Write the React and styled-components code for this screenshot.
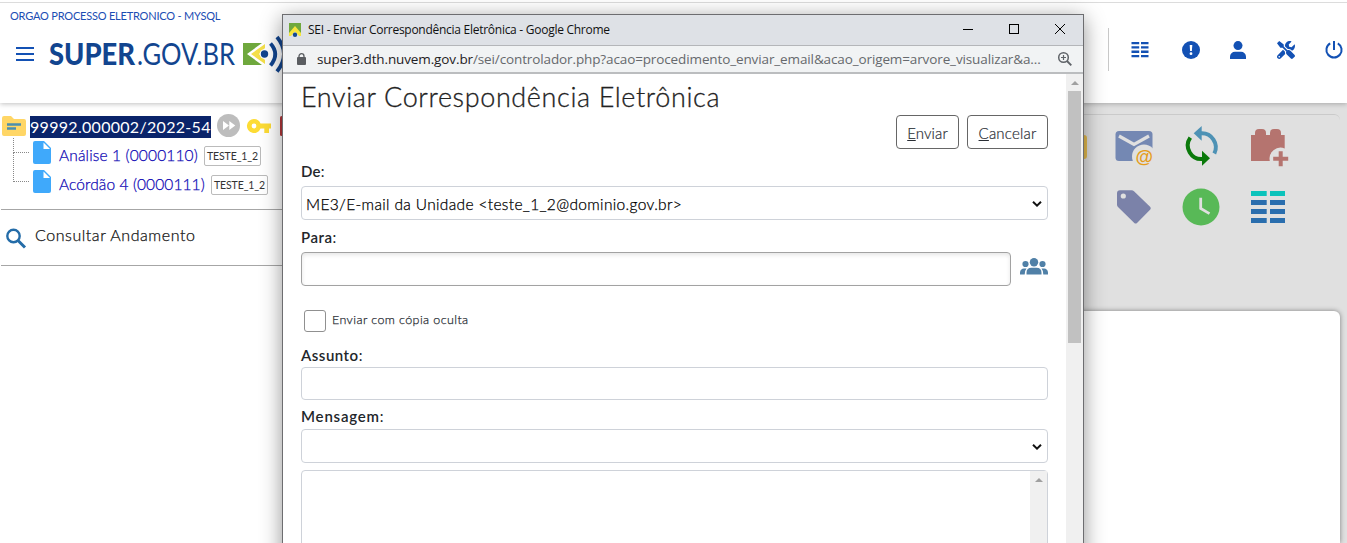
import React from "react";
import styled, { createGlobalStyle } from "styled-components";

const GlobalStyle = createGlobalStyle`
  * { box-sizing: border-box; }
  body { margin: 0; overflow: hidden; background: #fff; font-family: Lato, "Open Sans", sans-serif; }
  svg { display: block; flex: none; overflow: visible; }
`;

const Page = styled.div`
  position: relative;
  width: 1347px;
  height: 543px;
  overflow: hidden;
  display: flex;
  flex-direction: column;
  background: #fff;
`;

/* Header */
const Header = styled.header`
  position: relative;
  z-index: 1;
  flex: none;
  height: 103px;
  background: linear-gradient(#fff 2px, #dcdcdc 2px, #dcdcdc 3px, #fff 3px);
  box-shadow: 0 1px 5px rgba(0, 0, 0, 0.25);
  display: flex;
  justify-content: space-between;
`;
const Brand = styled.div`
  padding: 9px 0 0 10px;
`;
const Agency = styled.div`
  font-size: 11px;
  line-height: 14px;
  color: #1b4db3;
  letter-spacing: ${(p) => p.$track};
  white-space: nowrap;
`;
const LogoRow = styled.div`
  display: flex;
  align-items: flex-start;
  gap: 15px;
  padding: 11px 0 0 6px;
`;
const MenuButton = styled.div`
  padding-top: 12px;
`;
const HeaderTools = styled.nav`
  height: 43px;
  margin-top: 28px;
  padding: 0 4px 0 22px;
  border-left: 1px solid #c8c8c8;
  display: flex;
  align-items: center;
  gap: 30.4px;
`;

/* Main area */
const Main = styled.main`
  flex: 1;
  display: flex;
  justify-content: space-between;
`;
const Sidebar = styled.aside`
  width: 283px;
  padding-top: 10px;
`;
const TreeRoot = styled.div`
  display: flex;
  align-items: center;
  height: 25px;
  padding-left: 2px;
`;
const Selected = styled.span`
  display: block;
  width: 181px;
  height: 22px;
  margin: 3px 6px 0 4px;
  background: #0a246a;
  color: #fff;
  font-size: 16px;
  line-height: 22px;
  letter-spacing: ${(p) => p.$track};
  white-space: nowrap;
`;
const Key = styled.div`
  margin: 0 9px 0 7px;
`;
const RedEdge = styled.div`
  width: 10px;
  height: 20px;
  border-radius: 2px;
  background: #b5373a;
`;
const Branch = styled.div`
  margin-left: 13px;
`;
const TreeNode = styled.div`
  display: flex;
  align-items: center;
  height: 29px;
`;
const Connector = styled.div`
  align-self: flex-start;
  width: 16px;
  height: ${(p) => p.$h}px;
  margin-top: ${(p) => p.$top || 0}px;
  border-left: 1px dotted #888;
  border-bottom: 1px dotted #888;
  margin-right: 4px;
`;
const NodeLink = styled.a`
  margin: 4px 6px 0 8px;
  font-size: 15.5px;
  font-weight: 300;
  -webkit-text-stroke: 0.25px;
  color: #0f08b4;
  letter-spacing: ${(p) => p.$track};
  width: ${(p) => p.$w}px;
  white-space: nowrap;
`;
const Unit = styled.span`
  width: 57px;
  height: 20px;
  margin-top: 6px;
  border: 1px solid #bbb;
  border-radius: 2px;
  font-size: 10.5px;
  line-height: 18px;
  letter-spacing: -0.1px;
  text-align: center;
  color: #333;
  white-space: nowrap;
`;
const Progress = styled.div`
  margin: 13px 0 0 1px;
  height: 57px;
  border-top: 1px solid #a6a6a6;
  border-bottom: 1px solid #a6a6a6;
  padding: 0 0 0 5px;
  display: flex;
  align-items: center;
  gap: 9px;
  font-size: 16px;
  font-weight: 300;
  -webkit-text-stroke: 0.25px;
  color: #111;
  letter-spacing: ${(p) => p.$track};
`;
const ProgressText = styled.span`
  margin-top: -6px;
`;

const Workspace = styled.section`
  width: 307px;
  background: #e0e0e0;
  display: flex;
  flex-direction: column;
`;
const ActionPanel = styled.div`
  height: 197px;
  margin: 11px 7px 0 0;
  border-top: 1px solid #cacaca;
  border-top-right-radius: 6px;
  padding: 13px 0 0 7px;
`;
const ActionGrid = styled.div`
  display: grid;
  grid-template-columns: repeat(4, 40px);
  grid-auto-rows: 40px;
  column-gap: 27px;
  row-gap: 19px;
`;
const YellowCell = styled.div`
  height: 24px;
  margin-top: 7px;
  border-radius: 3px;
  background: #e7bd4f;
`;
const Canvas = styled.div`
  flex: 1;
  margin-right: 7px;
  background: #fff;
  border-top-right-radius: 6px;
  box-shadow: 0 0 5px rgba(0, 0, 0, 0.45);
`;

/* Browser window floating above the page */
const Popup = styled.div`
  position: absolute;
  z-index: 2;
  left: 282px;
  top: 14px;
  width: 802px;
  height: 560px;
  border: 1px solid #6d6d70;
  background: #fff;
  box-shadow: 0 4px 20px rgba(0, 0, 0, 0.42);
  display: flex;
  flex-direction: column;
`;
const TitleBar = styled.div`
  flex: none;
  height: 31px;
  border-bottom: 1px solid #b4b6b9;
  background: #dee1e6;
  display: flex;
  align-items: center;
  padding: 0 17px 0 6px;
`;
const WindowTitle = styled.span`
  flex: 1;
  margin-left: 7px;
  font: 12px/16px "Open Sans", sans-serif;
  letter-spacing: ${(p) => p.$track};
  color: #111;
`;
const WindowControls = styled.div`
  display: flex;
  gap: 34px;
  margin-top: -2px;
`;
const AddressBar = styled.div`
  flex: none;
  height: 28px;
  border-bottom: 2px solid #bbbdbf;
  background: #f1f3f4;
  display: flex;
  align-items: center;
  padding: 0 11px 0 14px;
`;
const Url = styled.span`
  flex: 1;
  margin-left: 11px;
  font: 13.5px/18px "Open Sans", sans-serif;
  letter-spacing: ${(p) => p.$track};
  color: #66696d;
  white-space: nowrap;
  b { font-weight: 400; color: #1f2023; }
`;
const Viewport = styled.div`
  flex: 1;
  display: flex;
`;
const Form = styled.form`
  flex: 1;
  padding: 7px 18px 0;
`;
const Heading = styled.h1`
  margin: 0;
  font-size: 27px;
  font-weight: 300;
  line-height: 32px;
  height: 34px;
  -webkit-text-stroke: 0.3px;
  color: #222;
  letter-spacing: ${(p) => p.$track};
  white-space: nowrap;
`;
const ButtonRow = styled.div`
  display: flex;
  justify-content: flex-end;
  gap: 8px;
`;
const Button = styled.button`
  width: ${(p) => p.$w}px;
  height: 34px;
  padding: 1px 0 0;
  border: 1px solid #666;
  border-radius: 4px;
  background: #fff;
  font: 300 15px Lato, sans-serif;
  -webkit-text-stroke: 0.2px;
  letter-spacing: ${(p) => p.$track};
  color: #2a2e35;
`;
const Label = styled.label`
  display: block;
  height: 18px;
  margin-top: ${(p) => p.$top}px;
  font-size: 15px;
  line-height: 17px;
  font-weight: 600;
  letter-spacing: ${(p) => p.$track};
  color: #22262a;
  span { font-weight: 400; }
`;
const Field = styled.div`
  flex: 1;
  height: ${(p) => p.$h || 34}px;
  margin-top: ${(p) => p.$top || 0}px;
  border: 1px solid ${(p) => (p.$dark ? "#a2a2a2" : "#ced2d9")};
  border-radius: 4px;
  box-shadow: ${(p) => (p.$dark ? "inset 0 2px 4px rgba(0,0,0,.1)" : "none")};
  padding: 2px 5px 0 4px;
  display: flex;
  align-items: center;
  justify-content: space-between;
  font-size: 15.5px;
  font-weight: 300;
  -webkit-text-stroke: 0.25px;
  color: #000;
  letter-spacing: ${(p) => p.$track};
`;
const Recipients = styled.div`
  display: flex;
  align-items: center;
  gap: 9px;
  margin-top: 5px;
`;
const PeopleButton = styled.div`
  margin-top: -5px;
`;
const CheckRow = styled.div`
  display: flex;
  align-items: center;
  gap: 6px;
  margin: 24px 0 0 3px;
  font-size: 12.5px;
  font-weight: 300;
  -webkit-text-stroke: 0.25px;
  color: #2a2e35;
  letter-spacing: ${(p) => p.$track};
`;
const CheckBox = styled.span`
  width: 22px;
  height: 22px;
  border: 1px solid #909090;
  border-radius: 3px;
`;
const CheckText = styled.span`
  margin-top: -3px;
`;
const TextArea = styled.div`
  height: 120px;
  margin-top: 7px;
  border: 1px solid #ced2d9;
  border-radius: 4px;
  display: flex;
  justify-content: flex-end;
`;
const ScrollTrack = styled.div`
  width: 17px;
  background: #f0f0f0;
  display: flex;
  flex-direction: column;
  align-items: center;
  padding-top: 7px;
`;
const ScrollThumb = styled.div`
  width: 13px;
  height: 252px;
  margin-top: 6px;
  background: #c1c1c1;
`;

const UpArrow = () => (
  <svg width="8" height="4"><path d="M4 0L8 4H0z" fill="#a0a0a0" /></svg>
);
const Chevron = () => (
  <svg width="10" height="6" viewBox="0 0 10 6">
    <path d="M1 .8L5 4.6L9 .8" fill="none" stroke="#111" strokeWidth="2" />
  </svg>
);
const Document = () => (
  <svg width="18" height="23" viewBox="0 0 18 23">
    <path d="M2 0H11L18 7V21a2 2 0 0 1-2 2H2a2 2 0 0 1-2-2V2a2 2 0 0 1 2-2z" fill="#3fa9fb" />
    <path d="M10.500 1.500V8H17z" fill="#fff" />
  </svg>
);

const Logo = () => (
  <svg width="236" height="44" viewBox="0 0 236 44">
    <g fontFamily="Lato" fontSize="31" fill="#12458f">
      <text x="0" y="31" fontWeight="900" textLength="86" lengthAdjust="spacingAndGlyphs">SUPER</text>
      <text x="88" y="31" textLength="98" lengthAdjust="spacingAndGlyphs">.GOV.BR</text>
    </g>
    <path d="M194 9H213L198 20L213 31H194z" fill="#6fa83d" />
    <path d="M216 10L202 20L216 30V26L210 20L216 14z" fill="#f4df49" />
    <circle cx="215.500" cy="20" r="4.800" fill="#fff" />
    <circle cx="215.500" cy="20" r="3.700" fill="#12458f" />
    <g fill="none" stroke="#12458f" strokeWidth="3.800">
      <path d="M221.500 9.500Q231 20 221.500 31.500" />
      <path d="M228 3Q242 20 228 37.500" />
    </g>
  </svg>
);

const HeaderIcons = () => (
  <HeaderTools>
    <svg width="18" height="18" viewBox="0 0 18 18" fill="#1351b4">
      {[1, 5.3, 9.6, 13.9].map((y) => (
        <path key={y} d={`M.5 ${y}h7.7v2.3H.5zM10 ${y}h7.5v2.3H10z`} />
      ))}
    </svg>
    <svg width="20" height="18" viewBox="-2 0 20 18">
      <circle cx="9" cy="9" r="9" fill="#1351b4" />
      <path d="M7.700 4h2.600l-.4 6H8.100z" fill="#fff" /><circle cx="9" cy="12.700" r="1.400" fill="#fff" />
    </svg>
    <svg width="16" height="18" viewBox="0 0 16 18" fill="#1351b4">
      <circle cx="8" cy="4.600" r="4.500" />
      <path d="M0 18v-2.200A5 5 0 0 1 5 10.800H11a5 5 0 0 1 5 5V18z" />
    </svg>
    <svg width="18" height="18" viewBox="0 0 512 512" fill="#1351b4">
      <path d="M501.100 395.700L384 278.600c-23.100-23.100-57.600-27.600-85.400-13.900L192 158.100V96L64 0 0 64l96 128h62.100l106.600 106.600c-13.600 27.800-9.200 62.300 13.900 85.400l117.100 117.100c14.600 14.600 38.200 14.600 52.700 0l52.700-52.700c14.500-14.600 14.500-38.200 0-52.700zM331.700 225c28.300 0 54.900 11 74.900 31l19.400 19.400c15.800-6.900 30.800-16.500 43.800-29.500 37.100-37.100 49.700-89.300 37.900-136.700-2.200-9-13.500-12.100-20.100-5.500l-74.400 74.400-67.900-11.300L334 98.900l74.400-74.400c6.600-6.600 3.400-17.900-5.700-20.200-47.400-11.700-99.600.9-136.600 37.900-28.500 28.500-41.900 66.100-41.200 103.600l82.100 82.100c8.100-1.900 16.500-2.900 24.700-2.900zm-103.900 82l-56.700-56.700L18.700 402.800c-25 25-25 65.500 0 90.500s65.500 25 90.500 0l123.600-123.600c-7.600-19.900-9.900-41.600-5-62.700zM64 472c-13.200 0-24-10.800-24-24 0-13.300 10.700-24 24-24s24 10.700 24 24c0 13.200-10.700 24-24 24z" />
    </svg>
    <svg width="18" height="18" viewBox="0 0 18 18" fill="none" stroke="#1351b4" strokeWidth="2">
      <path d="M5.200 2.300A7.600 7.600 0 1 0 12.800 2.300M9 0V9" />
    </svg>
  </HeaderTools>
);

const Actions = () => (
  <ActionGrid>
    <YellowCell />
    <svg width="40" height="40">
      <rect x="1.500" y="3" width="37" height="30" rx="3.500" fill="#7488b3" />
      <path d="M5 8L20 16.500L35 8" fill="none" stroke="#e0e0e0" strokeWidth="3.200" />
      <circle cx="30" cy="28.500" r="12" fill="#e0e0e0" />
      <text x="21.500" y="34.500" fontFamily="Liberation Sans" fontWeight="700" fontSize="19" fill="#e59d1c" textLength="17.500" lengthAdjust="spacingAndGlyphs">@</text>
    </svg>
    <svg width="40" height="40" fill="none" strokeWidth="4">
      <path d="M20 5.300A14 14 0 0 1 33.300 25.500" stroke="#4e92b5" />
      <path d="M20.700 -2V12.700L12.700 5.300z" fill="#4e92b5" />
      <path d="M9.300 9.700A13.600 13.600 0 0 0 22 31" stroke="#0a790a" />
      <path d="M21 22.700V37.700L29 30.300z" fill="#0a790a" />
    </svg>
    <svg width="40" height="40">
      <path d="M3 7H7V5Q7 1 11 1H14Q18 1 18 5V7H22V5Q22 1 26 1H29Q33 1 33 5V7H36.700V20.500A11 11 0 0 0 21.800 33H3z" fill="#b5746f" />
      <path d="M30.700 23.300h4v5.500h5.500v4h-5.500v5.500h-4v-5.500h-5.500v-4h5.500z" fill="#b5746f" />
    </svg>
    <div />
    <svg width="40" height="40">
      <path d="M6 3.300H17.500Q19 3.300 20 4.300L36.300 20Q37.300 21.200 36.300 22.500L23 36Q21.700 37.200 20.300 36L4 20Q3 19 3 17.500V6.300Q3 3.300 6 3.300z" fill="#7b82a9" />
      <circle cx="9.300" cy="9" r="2.600" fill="#e0e0e0" />
    </svg>
    <svg width="40" height="40">
      <circle cx="20" cy="20" r="18.500" fill="#58b957" />
      <path d="M19.700 10.700V21.500L28.500 26.600" fill="none" stroke="#e0e0e0" strokeWidth="2.800" />
    </svg>
    <svg width="40" height="40">
      {[4, 13, 22, 31].map((y, i) => (
        <path key={y} d={`M3 ${y}h15.700v5H3zM22 ${y}h15v5H22z`} fill={i ? "#2a6eae" : "#0cc3bb"} />
      ))}
    </svg>
  </ActionGrid>
);

export default function App() {
  return (
    <Page>
      <GlobalStyle />
      <Header>
        <Brand>
          <Agency $track="-0.2px">ORGAO PROCESSO ELETRONICO - MYSQL</Agency>
          <LogoRow>
            <MenuButton>
              <svg width="18" height="16" viewBox="0 0 18 16">
                <path d="M0 2H18M0 8H18M0 14H18" stroke="#1351b4" strokeWidth="2" />
              </svg>
            </MenuButton>
            <Logo />
          </LogoRow>
        </Brand>
        <HeaderIcons />
      </Header>

      <Main>
        <Sidebar>
          <TreeRoot>
            <svg width="24" height="20" viewBox="0 0 24 20">
              <path d="M2 0H9L12 3H22a2 2 0 0 1 2 2V18a2 2 0 0 1-2 2H2a2 2 0 0 1-2-2V2a2 2 0 0 1 2-2z" fill="#ffd666" />
              <path d="M5 8.500H19M5 12.500H14" stroke="#4c8fae" strokeWidth="2.300" />
            </svg>
            <Selected $track="0.3px">99992.000002/2022-54</Selected>
            <svg width="23" height="23" viewBox="0 0 23 23">
              <circle cx="11.500" cy="11.500" r="11.500" fill="#bdbdbd" />
              <path d="M6 7L12 11.500L6 16zM12.300 7L18.300 11.500L12.300 16z" fill="#fff" />
            </svg>
            <Key>
              <svg width="24" height="14" viewBox="0 0 24 14">
                <path d="M7 0a7 7 0 0 1 6.500 4.600H24V9.400H22V14H17.300V9.400H13.500A7 7 0 1 1 7 0zM7 4.600A2.400 2.400 0 1 0 7 9.400A2.400 2.400 0 1 0 7 4.600z" fill="#fddc35" fillRule="evenodd" />
              </svg>
            </Key>
            <RedEdge />
          </TreeRoot>
          <Branch>
            <TreeNode>
              <Connector $h={15} />
              <Document />
              <NodeLink $w={139} $track="0.15px">Análise 1 (0000110)</NodeLink>
              <Unit>TESTE_1_2</Unit>
            </TreeNode>
            <TreeNode>
              <Connector $h={29} $top={-14} />
              <Document />
              <NodeLink $w={146} $track="0.1px">Acórdão 4 (0000111)</NodeLink>
              <Unit>TESTE_1_2</Unit>
            </TreeNode>
          </Branch>
          <Progress $track="0.55px">
            <svg width="20" height="20" viewBox="0 0 20 20" fill="none" stroke="#246ca8">
              <circle cx="7.500" cy="8" r="6.200" strokeWidth="2.400" />
              <path d="M12 12.500L19 19.500" strokeWidth="3" />
            </svg>
            <ProgressText>Consultar Andamento</ProgressText>
          </Progress>
        </Sidebar>
        <Workspace>
          <ActionPanel><Actions /></ActionPanel>
          <Canvas />
        </Workspace>
      </Main>

      <Popup>
        <TitleBar>
          <svg width="12" height="14" viewBox="0 0 12 14">
            <path d="M0 0H12V13L6 6L0 13z" fill="#6fa83d" />
            <path d="M6 3L12 10V13H10L6 8.500L2 13H0V10z" fill="#f7e53c" />
            <circle cx="6" cy="11.800" r="2.200" fill="#164a92" />
          </svg>
          <WindowTitle $track="-0.27px">SEI - Enviar Correspondência Eletrônica - Google Chrome</WindowTitle>
          <WindowControls>
            <svg width="12" height="11"><path d="M1 5.500H11" stroke="#000" /></svg>
            <svg width="12" height="11"><rect x="1.500" y=".5" width="9" height="9" fill="none" stroke="#000" /></svg>
            <svg width="12" height="11"><path d="M1 0L11 10M11 0L1 10" stroke="#000" /></svg>
          </WindowControls>
        </TitleBar>
        <AddressBar>
          <svg width="9" height="12" viewBox="0 0 9 12">
            <rect y="4" width="9" height="8" rx="1" fill="#5a5d61" />
            <path d="M2 4.500V3.200a2.500 2.500 0 0 1 5 0V4.500" fill="none" stroke="#5a5d61" strokeWidth="1.300" />
          </svg>
          <Url $track="-0.12px"><b>super3.dth.nuvem.gov.br</b>/sei/controlador.php?acao=procedimento_enviar_email&amp;acao_origem=arvore_visualizar&amp;a...</Url>
          <svg width="14" height="14" viewBox="0 0 14 14" fill="none" stroke="#5f6368">
            <circle cx="5.500" cy="5.500" r="4.800" strokeWidth="1.500" />
            <path d="M9 9L13.300 13.300" strokeWidth="1.900" />
            <path d="M3 5.500H8M5.500 3V8" strokeWidth="1.200" />
          </svg>
        </AddressBar>
        <Viewport>
          <Form>
            <Heading $track="0.62px">Enviar Correspondência Eletrônica</Heading>
            <ButtonRow>
              <Button type="button" $w={63} $track="0.1px"><u>E</u>nviar</Button>
              <Button type="button" $w={81} $track="0.2px"><u>C</u>ancelar</Button>
            </ButtonRow>
            <Label $top={14} $track="0.2px">De<span>:</span></Label>
            <Field $top={5} $track="0.35px">ME3/E-mail da Unidade &lt;teste_1_2@dominio.gov.br&gt;<Chevron /></Field>
            <Label $top={9} $track="0.5px">Para<span>:</span></Label>
            <Recipients>
              <Field $dark />
              <PeopleButton>
                <svg width="28" height="17" viewBox="0 0 28 17" fill="#5080a7">
                  <circle cx="14" cy="4.200" r="4.200" />
                  <circle cx="5.500" cy="6" r="3.100" /><circle cx="22.500" cy="6" r="3.100" />
                  <path d="M6.500 16.500V14.800Q6.500 9.800 11.500 9.800H16.500Q21.500 9.800 21.500 14.800V16.500zM0 16.500V14.500Q.3 10.800 4 10.500H6.500Q4.700 12.500 4.700 16.500zM28 16.500V14.500Q27.700 10.800 24 10.500H21.500Q23.300 12.500 23.300 16.500z" />
                </svg>
              </PeopleButton>
            </Recipients>
            <CheckRow $track="0.4px"><CheckBox /><CheckText>Enviar com cópia oculta</CheckText></CheckRow>
            <Label $top={15} $track="0.5px">Assunto<span>:</span></Label>
            <Field $h={33} $top={2} />
            <Label $top={8} $track="0.8px">Mensagem<span>:</span></Label>
            <Field $top={3}><span /><Chevron /></Field>
            <TextArea><ScrollTrack><UpArrow /></ScrollTrack></TextArea>
          </Form>
          <ScrollTrack><UpArrow /><ScrollThumb /></ScrollTrack>
        </Viewport>
      </Popup>
    </Page>
  );
}
